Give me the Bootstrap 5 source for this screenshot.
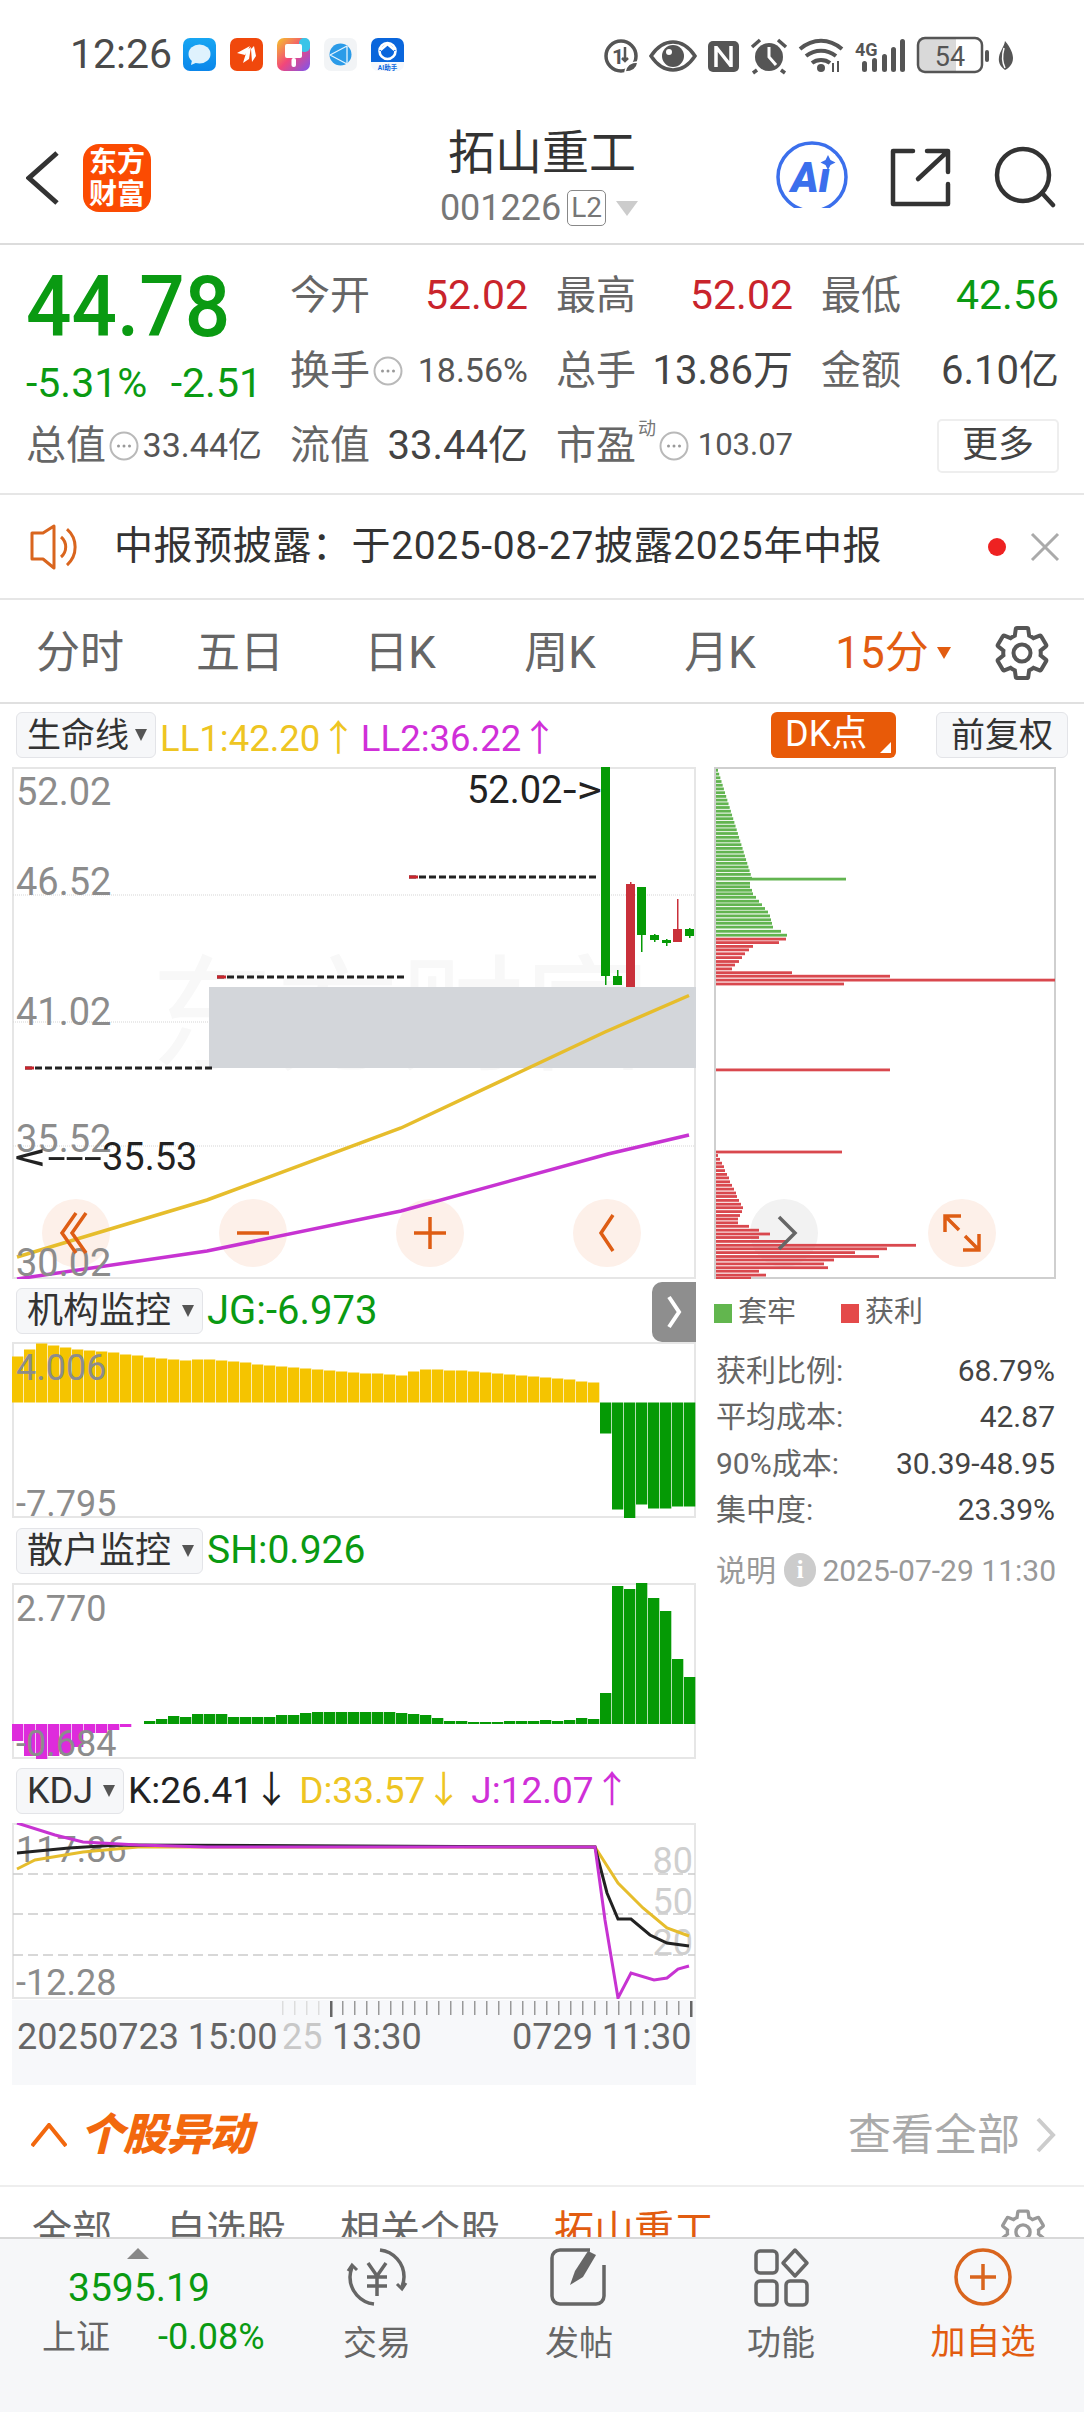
<!DOCTYPE html>
<html lang="zh-CN">
<head>
<meta charset="UTF-8">
<meta name="viewport" content="width=device-width, initial-scale=1.0">
<title>拓山重工</title>
<link href="https://cdn.jsdelivr.net/npm/bootstrap@5.3.0/dist/css/bootstrap.min.css" rel="stylesheet">
<style>
body { margin:0; background:#fff; color:#444; font-family:Roboto,"Noto Sans CJK SC",sans-serif; }
.phone { width:1084px; height:2412px; overflow:hidden; background:#fff; }
.up { color:#c9242c; }
.down { color:#0a9a12; }
.orange { color:#e25c10; }

.status-strip { height:100px; padding:8px 0 0 70px; color:#4a4a4a; font-size:41px; position:relative; }
.status-time { width:113px; line-height:1; }
.app-tile { width:33px; height:33px; margin-right:14px; display:block; }
.status-icons { position:absolute; left:604px; top:36px; }

.top-head { height:145px; padding-top:12px; border-bottom:2px solid #dcdcdc; position:relative; }
.head-back { margin-left:26px; }
.head-logo { width:68px; height:68px; margin-left:23px; background:#fb4b02; border-radius:16px; color:#fff; font-size:28px; line-height:32px; font-weight:700; text-align:center; padding-top:3px; }
.head-title { position:absolute; left:0; right:0; top:24px; text-align:center; color:#333; }
.title-name { font-size:47px; line-height:58px; }
.title-code { font-size:36px; line-height:40px; color:#777; margin-top:6px; padding-right:6px; }
.l2-tag { border:1px solid #888; border-radius:5px; font-size:28px; line-height:34px; padding:0 3px; margin:0 10px 0 6px; }
.tri-down { width:0; height:0; border-left:11px solid transparent; border-right:11px solid transparent; border-top:15px solid #ccc; }
.head-actions { position:absolute; left:770px; top:-2px; }

.quote { height:250px; padding:13px 0 0 26px; border-bottom:2px solid #e6e6e6; display:grid; grid-template-columns:236px 238px 237px 238px; column-gap:28px; grid-auto-rows:75px; font-size:40px; color:#666; }
.qcell { display:flex; align-items:center; justify-content:space-between; white-space:nowrap; }
.qcell .qfar { margin-left:auto; }
.qprice { font-size:80px; font-weight:500; line-height:1; margin-top:9px; color:#0a9a12; transform:scaleY(1.07); transform-origin:left center; height:75px; }
.qnum { font-size:41px; }
.qchg { margin-top:26px; font-size:41px; }
.qsmall { font-size:34px; color:#555; }
.qsmaller { font-size:31px; color:#555; }
.qval { color:#444; }
.sup-dong { font-size:18px; position:relative; top:-24px; margin-left:2px; color:#777; }
.more-btn { width:122px; height:54px; margin-left:auto; border:2px solid #eee; border-radius:5px; background:#fff; color:#444; font-size:36px; line-height:48px; text-align:center; }
.dots { display:block; flex:none; margin-left:3px; }

.notice { height:105px; border-bottom:2px solid #e6e6e6; font-size:39px; letter-spacing:.6px; color:#333; padding-left:30px; position:relative; }
.notice-text { margin-left:32px; white-space:nowrap; }
.notice-dot { width:18px; height:18px; background:#ee2222; border-radius:50%; margin-left:auto; }

.period-tabs { height:104px; padding-top:3px; border-bottom:2px solid #e0e0e0; font-size:44px; color:#666; }
.ptab { width:160px; text-align:center; }
.ptab-on { margin-left:13px; }
.gear-cell { width:98px; text-align:center; }
.tab-tri { border-left:7px solid transparent; border-right:7px solid transparent; border-top:12px solid #e25c10; }

.chart-zone { height:1381px; }
.legend-row { height:63px; padding:8px 16px 0; font-size:36.500px; white-space:nowrap; }
.pick-box { height:46px; background:#f6f7f9; border:1px solid #e3e4e8; border-radius:6px; color:#333; font-size:34px; line-height:44px; padding:0 0 0 10px; display:flex; align-items:center; }
.pick-wide { width:187px; font-size:36px; justify-content:space-between; }
.pick-kdj { width:108px; font-size:36px; justify-content:space-between; }
.pick-arrow { width:0; height:0; border-left:6px solid transparent; border-right:6px solid transparent; border-top:12px solid #555; margin:0 8px 0 6px; }
.dk-btn { width:125px; height:46px; background:#e85a08; border-radius:6px; color:#fff; font-size:36px; line-height:44px; padding-left:14px; position:relative; margin-left:auto; }
.dk-btn::after { content:""; position:absolute; right:5px; bottom:5px; border-left:11px solid transparent; border-bottom:11px solid #fff; }
.fq-btn { width:132px; height:46px; background:#f6f7f9; border:1px solid #e3e4e8; border-radius:6px; color:#333; font-size:34px; line-height:44px; text-align:center; margin-left:40px; }
.c-yellow { color:#eec522; }
.c-magenta { color:#d02fd8; }
.c-black { color:#222; }
.col-left { width:684px; margin-left:12px; flex:none; }
.col-right { width:342px; margin-left:18px; flex:none; }
.chart-svg { display:block; }
.chart-svg text { font-family:Roboto,"Noto Sans CJK SC",sans-serif; }
.idx-head { height:63px; font-size:40px; white-space:nowrap; padding-left:4px; }
.idx-sh { height:65px; font-size:39px; }
.idx-kdj { height:64px; font-size:37px; }
.gap-d { margin-left:9px; }
.side-tab { width:44px; height:60px; margin-left:auto; margin-top:2px; background:#8e8e8e; border-radius:10px 0 0 10px; }
.time-axis { height:85px; background:#f7f8fa; margin-top:1px; }

.chip-legend { height:62px; font-size:29px; color:#666; padding-top:6px; }
.chip-square { width:18px; height:19px; margin-right:6px; }
.sq-green { background:#62b64e; }
.sq-red { background:#e44a4a; margin-left:45px; }
.chip-stats { font-size:30px; color:#666; margin-top:6px; }
.stat-row { height:46.500px; padding:0 1px 0 2px; }
.stat-row b { font-weight:400; color:#444; }
.chip-note { color:#999; font-size:30px; height:60px; margin-top:7px; padding-left:2px; white-space:nowrap; }
.info-dot { width:34px; height:34px; background:#ccc; border-radius:50%; color:#fff; font-size:26px; font-weight:700; text-align:center; line-height:34px; margin:0 6px 0 8px; font-family:"Liberation Serif",serif; }

.change-row { height:102px; border-bottom:2px solid #eee; padding:0 28px 0 31px; }
.change-title { font-size:44px; font-weight:900; font-style:italic; color:#f2680e; margin-left:13px; letter-spacing:-1px; }
.see-all { font-size:43px; color:#aaa; margin-left:auto; }
.change-tabs { height:50px; overflow:hidden; font-size:40px; color:#666; padding:16px 0 0 32px; gap:54px; line-height:56px; white-space:nowrap; }
.tabs-gear { margin-right:36px; margin-top:4px; }
.tool-bar { height:175px; background:#f6f7f9; border-top:2px solid #d8d8d8; }
.index-cell { width:276px; color:#666; position:relative; }
.index-tri { position:absolute; left:127px; top:9px; border-left:11px solid transparent; border-right:11px solid transparent; border-bottom:11px solid #888; }
.index-num { position:absolute; left:68px; top:26px; font-size:39px; line-height:46px; color:#0a9a12; }
.index-name { position:absolute; left:42px; top:76px; font-size:34px; line-height:44px; }
.index-chg { position:absolute; left:158px; top:76px; font-size:36px; line-height:44px; color:#0a9a12; }
.tool-item { width:202px; padding-top:8px; text-align:center; font-size:34px; line-height:44px; color:#666; }
.tool-item.orange { font-size:35px; color:#e25c10; }
.tool-item svg { display:block; margin:0 auto 14px; }
</style>
</head>
<body>
<svg width="0" height="0" class="position-absolute">
  <symbol id="gear" viewBox="0 0 24 24">
    <path fill="none" stroke="currentColor" stroke-width="1.6" d="M19.43 12.98c.04-.32.07-.64.07-.98s-.03-.66-.07-.98l2.11-1.65c.19-.15.24-.42.12-.64l-2-3.46c-.12-.22-.39-.3-.61-.22l-2.49 1c-.52-.4-1.08-.73-1.69-.98l-.38-2.65C14.46 2.18 14.25 2 14 2h-4c-.25 0-.46.18-.49.42l-.38 2.65c-.61.25-1.17.59-1.69.98l-2.49-1c-.23-.09-.49 0-.61.22l-2 3.46c-.13.22-.07.49.12.64l2.11 1.65c-.04.32-.07.65-.07.98s.03.66.07.98l-2.11 1.65c-.19.15-.24.42-.12.64l2 3.46c.12.22.39.3.61.22l2.49-1c.52.4 1.08.73 1.69.98l.38 2.65c.03.24.24.42.49.42h4c.25 0 .46-.18.49-.42l.38-2.65c.61-.25 1.17-.59 1.69-.98l2.49 1c.23.09.49 0 .61-.22l2-3.46c.12-.22.07-.49-.12-.64l-2.11-1.65z"/>
    <circle cx="12" cy="12" r="3.4" fill="none" stroke="currentColor" stroke-width="1.6"/>
  </symbol>
  <symbol id="dotring" viewBox="0 0 30 30">
    <circle cx="15" cy="15" r="13.5" fill="none" stroke="#b9b9b9" stroke-width="2"/>
    <circle cx="9.5" cy="15" r="1.5" fill="#999"/><circle cx="15" cy="15" r="1.5" fill="#999"/><circle cx="20.5" cy="15" r="1.5" fill="#999"/>
  </symbol>
</svg>

<div class="phone">

  <div class="status-strip d-flex align-items-center">
    <div class="status-time">12:26</div>
    <svg class="app-tile" viewBox="0 0 33 33"><defs><linearGradient id="gMsg" x1="0" y1="0" x2="0" y2="1"><stop offset="0" stop-color="#18a6f2"/><stop offset="1" stop-color="#0b86ea"/></linearGradient></defs><rect width="33" height="33" rx="7" fill="url(#gMsg)"/><ellipse cx="16.5" cy="16" rx="11" ry="9.5" fill="#dff2fd"/><path d="M9 22l-1 5 7-3z" fill="#dff2fd"/></svg>
    <svg class="app-tile" viewBox="0 0 33 33"><rect width="33" height="33" rx="7" fill="#f0480c"/><path d="M7 15l13-7-5 9zM13 25l4-13 4-3-2 12zM22 24l-1-13 3-3 2 10z" fill="#fff"/></svg>
    <svg class="app-tile" viewBox="0 0 33 33"><defs><linearGradient id="gPaint" x1="0" y1="0" x2="1" y2="1"><stop offset="0" stop-color="#f5c52a"/><stop offset=".5" stop-color="#f2477a"/><stop offset="1" stop-color="#7a55f0"/></linearGradient></defs><rect width="33" height="33" rx="7" fill="url(#gPaint)"/><rect x="22" width="11" height="14" rx="5" fill="#39c4e8"/><rect x="8" y="6" width="17" height="14" rx="2" fill="#fff"/><rect x="14.5" y="20" width="4.5" height="9" rx="2" fill="#fff"/></svg>
    <svg class="app-tile" viewBox="0 0 33 33"><rect width="33" height="33" rx="7" fill="#f2f4f6"/><circle cx="16.5" cy="16.5" r="11" fill="#2b9be8"/><path d="M6 17L23 8M6 17l17 9M23 8v18" stroke="#e4f3fd" stroke-width="1.3" fill="none"/></svg>
    <svg class="app-tile" viewBox="0 0 33 33"><rect width="33" height="33" rx="7" fill="#f5f8fd"/><path d="M0 7a7 7 0 0 1 7-7h19a7 7 0 0 1 7 7v17H0z" fill="#0a66dc"/><circle cx="16.5" cy="13" r="8" fill="none" stroke="#fff" stroke-width="2.6"/><path d="M8 13l8.500-7 8.500 7" fill="#0a66dc"/><path d="M9.500 12l7-6 7 6" fill="none" stroke="#fff" stroke-width="2.6"/><text x="16.500" y="31.500" text-anchor="middle" font-size="6.500" font-weight="700" fill="#0a66dc">AI助手</text></svg>

    <svg class="status-icons" width="420" height="40" viewBox="604 36 420 40" fill="#555">
      <circle cx="621" cy="56" r="15" fill="none" stroke="#555" stroke-width="3.500"/>
      <text x="612" y="64" font-size="21" font-weight="700">1</text>
      <path d="M625 47v14m-3-3l3 3 3-3" fill="none" stroke="#555" stroke-width="2.500"/>
      <path d="M625 72c1-7 6-10 13-10-1 7-6 10-13 10z" fill="#555" stroke="#fff" stroke-width="1.500"/>
      <path d="M651 56c6-9 14-14 22-14s16 5 22 14c-6 9-14 14-22 14s-16-5-22-14z" fill="none" stroke="#555" stroke-width="3.500"/>
      <circle cx="673" cy="56" r="11"/><circle cx="669" cy="52" r="3" fill="#fff"/>
      <rect x="708" y="41" width="31" height="31" rx="5"/>
      <path d="M716 46v21M731 46v21M716 47l15 19" fill="none" stroke="#fff" stroke-width="3.500"/>
      <circle cx="769" cy="57" r="14"/>
      <path d="M769 47v10l7 8" fill="none" stroke="#fff" stroke-width="3"/>
      <path d="M752 47l8-7M786 47l-8-7M757 70l-4 3M781 70l4 3" stroke="#555" stroke-width="3.500" fill="none"/>
      <path d="M800 49c13-11 29-11 42 0M806 56c9-7 21-7 30 0M812 63c5-4 13-4 18 0" fill="none" stroke="#555" stroke-width="4"/>
      <circle cx="821" cy="68" r="4"/>
      <path d="M833 63v9M838 61v11" stroke="#555" stroke-width="2"/>
      <text x="855" y="56" font-size="18" font-weight="700">4G</text>
      <rect x="862" y="61" width="5" height="11" rx="2.500"/>
      <rect x="872" y="58" width="5" height="14" rx="2.500"/>
      <rect x="882" y="54" width="5" height="18" rx="2.500"/>
      <rect x="891" y="47" width="5" height="25" rx="2.500"/>
      <rect x="900" y="39" width="5" height="33" rx="2.500"/>
      <path d="M921 38h35v34h-35a3 3 0 0 1-3-3v-28a3 3 0 0 1 3-3z" fill="#d9d9d9"/>
      <rect x="918" y="38" width="64" height="34" rx="7" fill="none" stroke="#555" stroke-width="2.500"/>
      <text x="950" y="66" text-anchor="middle" font-size="27">54</text>
      <rect x="985" y="50" width="4" height="12" rx="2"/>
      <path d="M1005 41c6 7 8 13 8 17 0 6-4 10-8 12-4-3-7-7-6-13 1-6 5-10 6-16z"/>
      <path d="M1004 48c-2 7-2 14 1 20" stroke="#fff" stroke-width="1.500" fill="none"/>
    </svg>
  </div>

  <div class="top-head d-flex align-items-center">
    <svg class="head-back" width="34" height="56" viewBox="0 0 34 56"><path d="M31 3L3 28l28 25" fill="none" stroke="#333" stroke-width="5"/></svg>
    <div class="head-logo">东方<br>财富</div>
    <div class="head-title">
      <div class="title-name">拓山重工</div>
      <div class="title-code d-flex align-items-center justify-content-center">001226<span class="l2-tag">L2</span><span class="tri-down"></span></div>
    </div>
    <svg class="head-actions" width="300" height="110" viewBox="770 98 300 110">
      <circle cx="812" cy="177" r="34" fill="none" stroke="#3b6fec" stroke-width="3.500"/>
      <text x="791" y="192" font-size="42" font-weight="900" font-style="italic" fill="#3b6fec">Ai</text>
      <rect x="820" y="154" width="15" height="15" fill="#fff"/>
      <path d="M828 155l2.500 5 5 2.500-5 2.500-2.500 5-2.500-5-5-2.500 5-2.500z" fill="#3b6fec"/>
      <path d="M913 151h-20v53h55v-20M918 179l29-27M927 151h21v21" fill="none" stroke="#333" stroke-width="4.500" stroke-linejoin="round" stroke-linecap="round"/>
      <circle cx="1023" cy="175" r="26" fill="none" stroke="#333" stroke-width="4.500"/>
      <path d="M1042 193l11 12" stroke="#333" stroke-width="4.500" stroke-linecap="round"/>
    </svg>
  </div>

  <div class="quote">
    <div class="qprice">44.78</div>
    <div class="qcell"><span>今开</span><span class="up qnum">52.02</span></div>
    <div class="qcell"><span>最高</span><span class="up qnum">52.02</span></div>
    <div class="qcell"><span>最低</span><span class="down qnum">42.56</span></div>

    <div class="qcell qchg down"><span>-5.31%</span><span>-2.51</span></div>
    <div class="qcell"><span>换手</span><svg class="dots" width="30" height="30"><use href="#dotring"/></svg><span class="qsmall qfar">18.56%</span></div>
    <div class="qcell"><span>总手</span><span class="qval">13.86万</span></div>
    <div class="qcell"><span>金额</span><span class="qval">6.10亿</span></div>

    <div class="qcell"><span>总值</span><svg class="dots" width="30" height="30"><use href="#dotring"/></svg><span class="qsmall qfar">33.44亿</span></div>
    <div class="qcell"><span>流值</span><span class="qval">33.44亿</span></div>
    <div class="qcell"><span>市盈<span class="sup-dong">动</span></span><svg class="dots" width="30" height="30"><use href="#dotring"/></svg><span class="qsmaller qfar">103.07</span></div>
    <div class="qcell"><div class="more-btn">更多</div></div>
  </div>

  <div class="notice d-flex align-items-center">
    <svg width="52" height="46" viewBox="0 0 52 46" fill="none" stroke="#d9651e" stroke-width="3"><path d="M2 9h11l11-7v42l-11-9H2z" stroke-linejoin="round"/><path d="M31 13a13 13 0 0 1 0 20M37 5a24 24 0 0 1 0 36"/></svg>
    <div class="notice-text">中报预披露：于2025-08-27披露2025年中报</div>
    <div class="notice-dot"></div>
    <svg class="ms-4 me-4" width="30" height="30" viewBox="0 0 30 30"><path d="M2 2l26 26M28 2L2 28" stroke="#aaa" stroke-width="3"/></svg>
  </div>

  <div class="period-tabs d-flex align-items-center">
    <div class="ptab">分时</div>
    <div class="ptab">五日</div>
    <div class="ptab">日K</div>
    <div class="ptab">周K</div>
    <div class="ptab">月K</div>
    <div class="ptab ptab-on orange d-flex align-items-center justify-content-center">15分<span class="tab-tri ms-2"></span></div>
    <div class="gear-cell"><svg class="d-block mx-auto" width="60" height="60" color="#555"><use href="#gear"/></svg></div>
  </div>

  <div class="chart-zone">
    <div class="legend-row d-flex">
      <div class="pick-box">生命线<span class="pick-arrow"></span></div>
      <span class="c-yellow ms-1">LL1:42.20↑</span>
      <span class="c-magenta ms-1">LL2:36.22↑</span>
      <div class="dk-btn">DK点</div>
      <div class="fq-btn">前复权</div>
    </div>

    <div class="d-flex">
      <div class="col-left">
        <svg class="chart-svg" width="684" height="512" viewBox="12 767 684 512">
          <rect x="13" y="768" width="682" height="510" fill="#fff" stroke="#e6e6e6" stroke-width="2"/>
          <text x="150" y="1060" font-size="125" fill="#f8f8f8">东方财富</text>
          <path d="M13 895H695M13 1022H695M13 1146H695" stroke="#d5d5d5" stroke-dasharray="1 1"/>
          <rect x="209" y="987" width="487" height="81" fill="#d3d6da"/>
          <circle cx="76" cy="1233" r="34" fill="#fdf0e9"/><circle cx="253" cy="1233" r="34" fill="#fdf0e9"/>
          <circle cx="430" cy="1233" r="34" fill="#fdf0e9"/><circle cx="607" cy="1233" r="34" fill="#fdf0e9"/>
          <path d="M409 877H598M217 977H405M25 1068H214" stroke="#222" stroke-width="3" stroke-dasharray="7 3"/>
          <path d="M409 877H418M217 977H226M25 1068H34" stroke="#c9242c" stroke-width="3"/>
          <g id="candles"></g>
          <polyline points="17,1257 207,1200 401,1128 605,1032 689,995.500" fill="none" stroke="#e6bd2c" stroke-width="3.500"/>
          <polyline points="17,1279 207,1251 401,1211 608,1154 689,1135" fill="none" stroke="#c733d2" stroke-width="3.500"/>
          <g font-size="38" fill="#8c8c8c">
            <text x="16" y="805">52.02</text><text x="16" y="895">46.52</text><text x="16" y="1025">41.02</text>
            <text x="16" y="1152">35.52</text><text x="16" y="1276">30.02</text>
          </g>
          <g font-size="38" fill="#222">
            <text x="467" y="803">52.02</text>
            <text x="563" y="803" textLength="39" lengthAdjust="spacingAndGlyphs">-&gt;</text>
            <text x="14" y="1170" textLength="88" lengthAdjust="spacingAndGlyphs">&lt;---</text>
            <text x="102" y="1170">35.53</text>
          </g>
          <g fill="none" stroke="#de5d14" stroke-width="3.500">
            <path d="M76 1213l-14 20 14 20M86 1213l-14 20 14 20M237 1233h32M430 1217v32M414 1233h32M613 1215l-12 18 12 18"/>
          </g>
        </svg>

        <div class="idx-head d-flex align-items-center">
          <div class="pick-box pick-wide">机构监控<span class="pick-arrow"></span></div>
          <span class="down ms-1">JG:-6.973</span>
          <div class="side-tab d-flex align-items-center justify-content-center"><svg width="18" height="36" viewBox="0 0 18 36"><path d="M4 3l10 15L4 33" fill="none" stroke="#fff" stroke-width="4"/></svg></div>
        </div>
        <svg class="chart-svg" width="684" height="176" viewBox="12 1342 684 176">
          <rect x="13" y="1343" width="682" height="174" fill="#fff" stroke="#e6e6e6" stroke-width="2"/>
          <g id="barsJg"></g>
          <text x="16" y="1380" font-size="36" fill="#8c8c8c">4.006</text>
          <text x="16" y="1516" font-size="36" fill="#8c8c8c">-7.795</text>
        </svg>

        <div class="idx-head idx-sh d-flex align-items-center">
          <div class="pick-box pick-wide">散户监控<span class="pick-arrow"></span></div>
          <span class="down ms-1">SH:0.926</span>
        </div>
        <svg class="chart-svg" width="684" height="176" viewBox="12 1583 684 176">
          <rect x="13" y="1584" width="682" height="174" fill="#fff" stroke="#e6e6e6" stroke-width="2"/>
          <g id="barsSh"></g>
          <text x="16" y="1621" font-size="36" fill="#8c8c8c">2.770</text>
          <text x="16" y="1756" font-size="36" fill="#8c8c8c">-0.684</text>
        </svg>

        <div class="idx-head idx-kdj d-flex align-items-center">
          <div class="pick-box pick-kdj">KDJ<span class="pick-arrow"></span></div>
          <span class="c-black ms-1">K:26.41↓</span>
          <span class="c-yellow gap-d">D:33.57↓</span>
          <span class="c-magenta gap-d">J:12.07↑</span>
        </div>
        <svg class="chart-svg" width="684" height="176" viewBox="12 1823 684 176">
          <rect x="13" y="1824" width="682" height="174" fill="#fff" stroke="#e6e6e6" stroke-width="2"/>
          <path d="M13 1874H695M13 1914H695M13 1955H695" stroke="#ccc" stroke-width="1.500" stroke-dasharray="10 5"/>
          <g font-size="36" fill="#cfcfcf"><text x="693" y="1873" text-anchor="end">80</text><text x="693" y="1914" text-anchor="end">50</text><text x="693" y="1955" text-anchor="end">20</text></g>
          <text x="16" y="1862" font-size="36" fill="#8c8c8c">117.86</text>
          <text x="16" y="1995" font-size="36" fill="#8c8c8c">-12.28</text>
          <polyline points="17,1869 35,1860 83,1852 138,1847 595,1847 618,1883 643,1908 667,1928 689,1936" fill="none" stroke="#e6bd2c" stroke-width="3"/>
          <polyline points="17,1853 69,1848 118,1845 595,1847 607,1893 618,1919 631,1919 650,1935 667,1943 689,1946" fill="none" stroke="#222" stroke-width="3"/>
          <polyline points="17,1823 55,1835 83,1842 138,1845 207,1847 595,1847 605,1920 618,1998 631,1973 654,1980 667,1978 678,1969 689,1966" fill="none" stroke="#c733d2" stroke-width="3"/>
        </svg>

        <svg class="chart-svg time-axis" width="684" height="85" viewBox="12 2000 684 85">
          <g id="ticks"></g>
          <g font-size="36" fill="#666">
            <text x="17" y="2049">20250723 15:00</text>
            <text x="282" y="2049" fill="#c8c8c8">25</text>
            <text x="332" y="2049">13:30</text>
            <text x="512" y="2049">0729 11:30</text>
          </g>
        </svg>
      </div>

      <div class="col-right">
        <svg class="chart-svg" width="342" height="512" viewBox="714 767 342 512">
          <rect x="715" y="768" width="340" height="510" fill="#fff" stroke="#cfcfcf" stroke-width="2"/>
          <circle cx="784" cy="1233" r="34" fill="#f2f2f2"/>
          <circle cx="962" cy="1233" r="34" fill="#fdf0e9"/>
          <g id="chipBars"></g>
          <path d="M779 1217l16 16-16 16" fill="none" stroke="#666" stroke-width="3.500"/>
          <path d="M945 1216l14 14M945 1232v-16h16M979 1250l-14-14M979 1234v16h-16" fill="none" stroke="#de5d14" stroke-width="3.500"/>
        </svg>
        <div class="chip-legend d-flex align-items-center">
          <span class="chip-square sq-green"></span><span>套牢</span>
          <span class="chip-square sq-red"></span><span>获利</span>
        </div>
        <div class="chip-stats">
          <div class="stat-row d-flex justify-content-between align-items-center"><span>获利比例:</span><b>68.79%</b></div>
          <div class="stat-row d-flex justify-content-between align-items-center"><span>平均成本:</span><b>42.87</b></div>
          <div class="stat-row d-flex justify-content-between align-items-center"><span>90%成本:</span><b>30.39-48.95</b></div>
          <div class="stat-row d-flex justify-content-between align-items-center"><span>集中度:</span><b>23.39%</b></div>
        </div>
        <div class="chip-note d-flex align-items-center">说明<span class="info-dot">i</span>2025-07-29 11:30</div>
      </div>
    </div>
  </div>

  <div class="change-row d-flex align-items-center">
    <svg width="36" height="24" viewBox="0 0 36 24"><path d="M1 23L18 2l17 21" fill="none" stroke="#f2680e" stroke-width="4"/></svg>
    <div class="change-title">个股异动</div>
    <div class="see-all">查看全部</div>
    <svg class="ms-3" width="20" height="36" viewBox="0 0 20 36"><path d="M2 2l15 16L2 34" fill="none" stroke="#ccc" stroke-width="4"/></svg>
  </div>
  <div class="change-tabs d-flex">
    <span>全部</span><span>自选股</span><span>相关个股</span><span class="orange">拓山重工</span>
    <svg class="tabs-gear ms-auto" width="50" height="50" color="#999"><use href="#gear"/></svg>
  </div>

  <div class="tool-bar d-flex">
    <div class="index-cell">
      <span class="index-tri"></span>
      <span class="index-num">3595.19</span>
      <span class="index-name">上证</span>
      <span class="index-chg">-0.08%</span>
    </div>
    <div class="tool-item">
      <svg width="66" height="60" viewBox="0 0 66 60" fill="none" stroke="#666" stroke-width="3.500">
        <path d="M36 3A27 27 0 0 1 60 30c0 4-1 7-2 10M30 57A27 27 0 0 1 6 30c0-4 1-7 2-10"/>
        <path d="M4 24l4-6 5 5M62 36l-4 6-5-5" stroke-width="3"/>
        <path d="M24 16l9 13 9-13M23 30h20M23 39h20M33 29v20"/>
      </svg>
      交易
    </div>
    <div class="tool-item">
      <svg width="66" height="60" viewBox="0 0 66 60" fill="none" stroke="#666" stroke-width="3.500">
        <path d="M44 3H14a8 8 0 0 0-8 8v38a8 8 0 0 0 8 8h36a8 8 0 0 0 8-8V18"/>
        <path d="M24 38l5-14L42 4l8 4-13 22z" fill="#666" stroke="none"/>
      </svg>
      发帖
    </div>
    <div class="tool-item">
      <svg width="66" height="60" viewBox="0 0 66 60" fill="none" stroke="#666" stroke-width="3.500">
        <rect x="8" y="4" width="21" height="22" rx="4"/><rect x="8" y="34" width="21" height="24" rx="4"/><rect x="38" y="34" width="21" height="24" rx="4"/>
        <path d="M47 3l12 13-12 13-12-13z" stroke-linejoin="round"/>
      </svg>
      功能
    </div>
    <div class="tool-item orange">
      <svg width="66" height="60" viewBox="0 0 66 60" fill="none" stroke="#d9651e" stroke-width="3.500">
        <circle cx="33" cy="30" r="27"/><path d="M33 17v26M20 30h26"/>
      </svg>
      加自选
    </div>
  </div>
</div>

<script>
const GREEN = "#059a05", RED = "#c9303a";

// candle: x, body top, body bottom, wick top, wick bottom, colour
const candles = [
  [601,767,976,767,985,GREEN],[613,976,985,970,985,GREEN],[626,884,987,882,987,RED],[637,887,935,887,952,GREEN],
  [650,935,940,934,942,GREEN],[662,940,943,939,946,GREEN],[673,929,942,899,942,RED],[685,929,936,928,938,GREEN]
];
document.getElementById("candles").innerHTML = candles.map(c =>
  `<rect x="${c[0]+4}" y="${c[3]}" width="1.500" height="${c[4]-c[3]}" fill="${c[5]}"/><rect x="${c[0]}" y="${c[1]}" width="9" height="${c[2]-c[1]}" fill="${c[5]}"/>`
).join("");

function drawBars(id, baseline, values, upColor, downColor) {
  document.getElementById(id).innerHTML = values.map((v, i) => {
    if (!v) return "";
    const y = v > 0 ? baseline - v : baseline;
    return `<rect x="${12 + i * 12}" y="${y}" width="11.300" height="${Math.abs(v)}" fill="${v > 0 ? upColor : downColor}"/>`;
  }).join("");
}

const jg = [46,53,59,57,55,53,52,51,50,48,47,45,44,43,42,43,43,42,41,40,38,37,36,35,34,33,32,31,30,29,29,28,27,31,33,33,32,32,31,30,29,28,27,26,25,24,23,21,20]
  .concat([-31,-107,-116,-102,-106,-106,-104,-104]);
drawBars("barsJg", 1402.5, jg, "#f5c400", GREEN);

const sh = [-17,-32,-35,-32,-30,-23,-9,-9,-6,-3,0,
  3,5,8,7,10,10,10,7,7,7,7,9,9,11,12,12,12,12,12,12,12,11,10,9,6,3,3,2,2,2,3,3,3,4,3,4,6,5,
  31,138,135,141,126,113,65,47];
drawBars("barsSh", 1724, sh, GREEN, "#de2bdc");

let ticks = "";
for (let x = 282; x < 696; x += 12) {
  const dark = x >= 330;
  const major = x === 330 || x === 690;
  ticks += `<rect x="${x}" y="2001" width="${major ? 2.5 : 1.5}" height="${major ? 16 : 14}" fill="${major ? "#666" : dark ? "#999" : "#ddd"}"/>`;
}
document.getElementById("ticks").innerHTML = ticks;

// chip bars read off the reference: [y in reference crop, width in px]
const chipGreen = [];
for (let i = 0; i < 30; i++) chipGreen.push([58 + i * 10.6, 2 + i * 1.17]);
chipGreen.push([368,130],[380,34],[390,34],[400,36],[410,37],[420,40],[431,43],[441,46],[452,49],[462,52],[473,54],[484,55],[494,56],[505,57],[517,65],[528,71]);
const chipRed = [[539,70],[549,63],[560,37],[570,33],[581,29],[592,26],[603,23],[613,19],[624,16],[635,76],[645,174],[656,339],[667,128],[912,174],[1146,126],
  [1156,2],[1167,4],[1178,6],[1188,8],[1199,9],[1210,11],[1220,13],[1231,14],[1241,16],[1252,18],[1263,20],[1273,21],[1284,23],[1295,25],[1305,27],[1316,26],[1327,24],[1337,22],[1348,22],
  [1358,33],[1369,43],[1380,54],[1390,43],[1401,70],[1412,200],[1422,171],[1433,139],[1444,163],[1454,118],[1465,108],[1476,112],[1486,43],[1497,50],[1506,35]];
const chipRow = (b, col) => `<rect x="716" y="${(750 + b[0] / 2.851 - 1.4).toFixed(1)}" width="${b[1]}" height="2.8" fill="${col}"/>`;
document.getElementById("chipBars").innerHTML =
  chipGreen.map(b => chipRow(b, "#62b450")).join("") + chipRed.map(b => chipRow(b, "#d9484e")).join("");
</script>
<script src="https://cdn.jsdelivr.net/npm/bootstrap@5.3.0/dist/js/bootstrap.bundle.min.js"></script>
</body>
</html>
